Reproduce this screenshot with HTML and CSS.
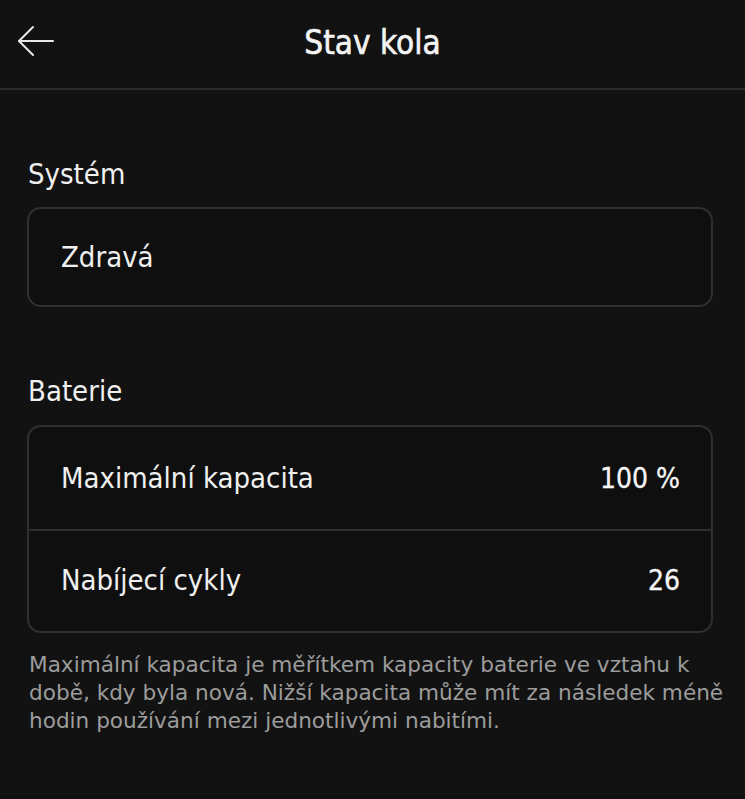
FILE: index.html
```html
<!DOCTYPE html>
<html lang="cs">
<head>
<meta charset="utf-8">
<title>Stav kola</title>
<link rel="stylesheet" href="styles.css">
</head>
<body>
<header class="topbar">
  <button class="back" aria-label="Zpět">
    <svg width="38" height="32" viewBox="0 0 38 32" fill="none" stroke="#e8e8e8" stroke-width="2" stroke-linecap="round" stroke-linejoin="round">
      <path d="M36 16H2"/>
      <path d="M16 2L2 16L16 30"/>
    </svg>
  </button>
  <h1 class="title">Stav kola</h1>
</header>
<main class="content">
  <section class="group">
    <h2 class="group-label">Systém</h2>
    <div class="card">
      <div class="row"><span class="row-label">Zdravá</span></div>
    </div>
  </section>
  <section class="group">
    <h2 class="group-label">Baterie</h2>
    <div class="card">
      <div class="row"><span class="row-label">Maximální kapacita</span><span class="row-value">100 %</span></div>
      <div class="row"><span class="row-label">Nabíjecí cykly</span><span class="row-value">26</span></div>
    </div>
    <p class="note">Maximální kapacita je měřítkem kapacity baterie ve vztahu k době, kdy byla nová. Nižší kapacita může mít za následek méně hodin používání mezi jednotlivými nabitími.</p>
  </section>
</main>
</body>
</html>
```
FILE: styles.css
```css
* { box-sizing: border-box; }
html, body { margin: 0; padding: 0; }
body {
  background: #121212;
  color: #f2f2f2;
  font-family: "DejaVu Sans Condensed", "DejaVu Sans", sans-serif;
  width: 745px;
  min-height: 799px;
}
.topbar {
  height: 90px;
  border-bottom: 2px solid #2a2a2a;
  display: flex;
  align-items: center;
  justify-content: center;
  position: relative;
}
.back {
  position: absolute;
  left: 17px;
  top: 25px;
  background: none;
  border: 0;
  padding: 0;
  margin: 0;
  line-height: 0;
}
.title {
  margin: 0 0 2px 0;
  font-size: 33px;
  font-weight: 400;
  -webkit-text-stroke: 0.6px #f4f4f4;
  color: #f4f4f4;
  line-height: 40px;
}
.content {
  padding: 0 32px 0 27px;
}
.group-label {
  margin: 0;
  font-size: 29px;
  font-weight: 400;
  line-height: 34px;
  color: #f0f0f0;
  padding-left: 1px;
  padding-top: 67px;
}
.group:first-child .group-label { height: 117px; }
.group + .group .group-label { height: 118px; }
.card {
  border: 2px solid #303030;
  border-radius: 14px;
  background: #0f0f0f;
}
.row {
  height: 96px;
  display: flex;
  align-items: center;
  justify-content: space-between;
  padding: 0 31px 0 32px;
  font-size: 29px;
}
.card .row:first-child:not(:only-child) { height: 102px; }
.card .row + .row { border-top: 2px solid #2e2e2e; height: 102px; padding-bottom: 2px; }
.row-label { color: #efefef; }
.row-value { color: #f6f6f6; font-size: 28px; -webkit-text-stroke: 0.3px #f6f6f6; }
.note {
  margin: 18px -14px 0 2px;
  font-family: "DejaVu Sans", sans-serif;
  font-size: 21.6px;
  line-height: 28px;
  color: #9c9c9c;
}
```
